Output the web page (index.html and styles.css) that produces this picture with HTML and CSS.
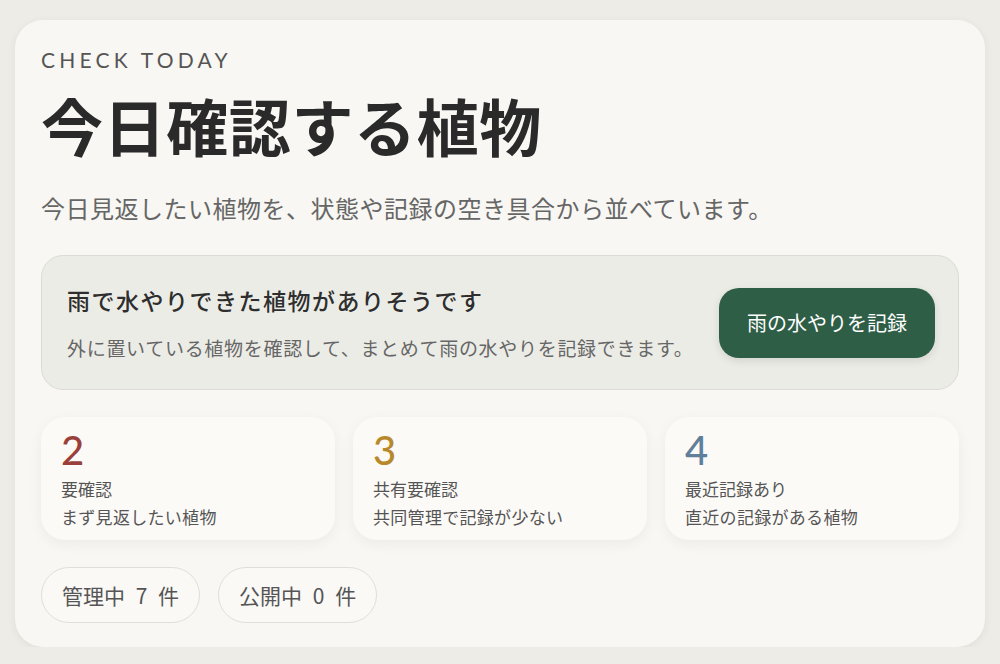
FILE: index.html
```html
<!DOCTYPE html>
<html lang="ja">
<head>
    <meta charset="utf-8">
    <title>今日確認する植物</title>
    <link rel="stylesheet" href="styles.css">
</head>
<body>
    <div class="today-card">
        <div class="eyebrow">CHECK TODAY</div>
        <h1 class="title">今日確認する植物</h1>
        <p class="lead">今日見返したい植物を、状態や記録の空き具合から並べています。</p>

        <div class="rain-banner">
            <div class="rain-text">
                <div class="rain-title">雨で水やりできた植物がありそうです</div>
                <div class="rain-desc">外に置いている植物を確認して、まとめて雨の水やりを記録できます。</div>
            </div>
            <button class="rain-button">雨の水やりを記録</button>
        </div>

        <div class="stats">
            <div class="stat">
                <div class="stat-num red">2</div>
                <div class="stat-label">要確認</div>
                <div class="stat-desc">まず見返したい植物</div>
            </div>
            <div class="stat">
                <div class="stat-num gold">3</div>
                <div class="stat-label">共有要確認</div>
                <div class="stat-desc">共同管理で記録が少ない</div>
            </div>
            <div class="stat">
                <div class="stat-num blue">4</div>
                <div class="stat-label">最近記録あり</div>
                <div class="stat-desc">直近の記録がある植物</div>
            </div>
        </div>

        <div class="pills">
            <span class="pill">管理中 7 件</span>
            <span class="pill">公開中 0 件</span>
        </div>
    </div>
</body>
</html>
```

FILE: styles.css
```css
body {
    margin: 0;
    background-color: #eeece6;
    font-family: "Noto Sans CJK JP", "Noto Sans", sans-serif;
    color: #333;
}
.today-card {
    margin: 20px 15px 0;
    padding: 28px 26px 24px;
    background-color: #f8f7f3;
    border-radius: 28px;
    box-shadow: 0 2px 10px rgba(0,0,0,0.06);
}
.eyebrow {
    font-family: Lato, "Noto Sans", sans-serif;
    font-size: 21px;
    line-height: 24px;
    letter-spacing: 4.2px;
    color: #555;
}
.title {
    margin: 16px 0 0;
    font-size: 62px;
    line-height: 74px;
    letter-spacing: 0.6px;
    font-weight: 700;
    color: #2a2a2a;
}
.lead {
    margin: 28px 0 0;
    font-size: 24px;
    line-height: 36px;
    letter-spacing: 0.5px;
    color: #666;
}
.rain-banner {
    margin-top: 29px;
    display: flex;
    align-items: center;
    justify-content: space-between;
    padding: 27px 23px 27px 25px;
    background-color: #ecece7;
    border: 1px solid #dcdcd6;
    border-radius: 22px;
}
.rain-title {
    font-size: 23px;
    line-height: 34px;
    letter-spacing: 1.5px;
    font-weight: 500;
    color: #2e2e2e;
}
.rain-desc {
    margin-top: 17px;
    font-size: 19px;
    line-height: 28px;
    letter-spacing: 0.7px;
    color: #666;
}
.rain-button {
    background-color: #2f5e47;
    color: white;
    border: none;
    border-radius: 20px;
    height: 70px;
    padding: 0 28px;
    font-family: "Noto Sans CJK JP", sans-serif;
    font-size: 20px;
    box-shadow: 0 3px 8px rgba(0,0,0,0.1);
}
.stats {
    margin-top: 27px;
    display: grid;
    grid-template-columns: repeat(3, 1fr);
    gap: 18px;
}
.stat {
    padding: 11px 20px 9px;
    background-color: #fcfaf7;
    border-radius: 24px;
    box-shadow: 0 4px 14px rgba(0,0,0,0.05);
}
.stat-num {
    font-family: Lato, "Noto Sans", sans-serif;
    font-size: 40px;
    line-height: 44px;
    font-weight: 500;
}
.red { color: #9b3f3a; }
.gold { color: #b8892a; }
.blue { color: #5f7f9a; }
.stat-label {
    margin-top: 3px;
    font-size: 17px;
    line-height: 28px;
    color: #555;
}
.stat-desc {
    font-size: 17px;
    line-height: 28px;
    letter-spacing: 0.3px;
    color: #555;
}
.pills {
    margin-top: 27px;
    display: flex;
    gap: 18px;
}
.pill {
    padding: 13px 20px;
    font-size: 21px;
    line-height: 28px;
    word-spacing: 6px;
    color: #555;
    background-color: #faf9f6;
    border: 1px solid #e0ded8;
    border-radius: 999px;
}
```
